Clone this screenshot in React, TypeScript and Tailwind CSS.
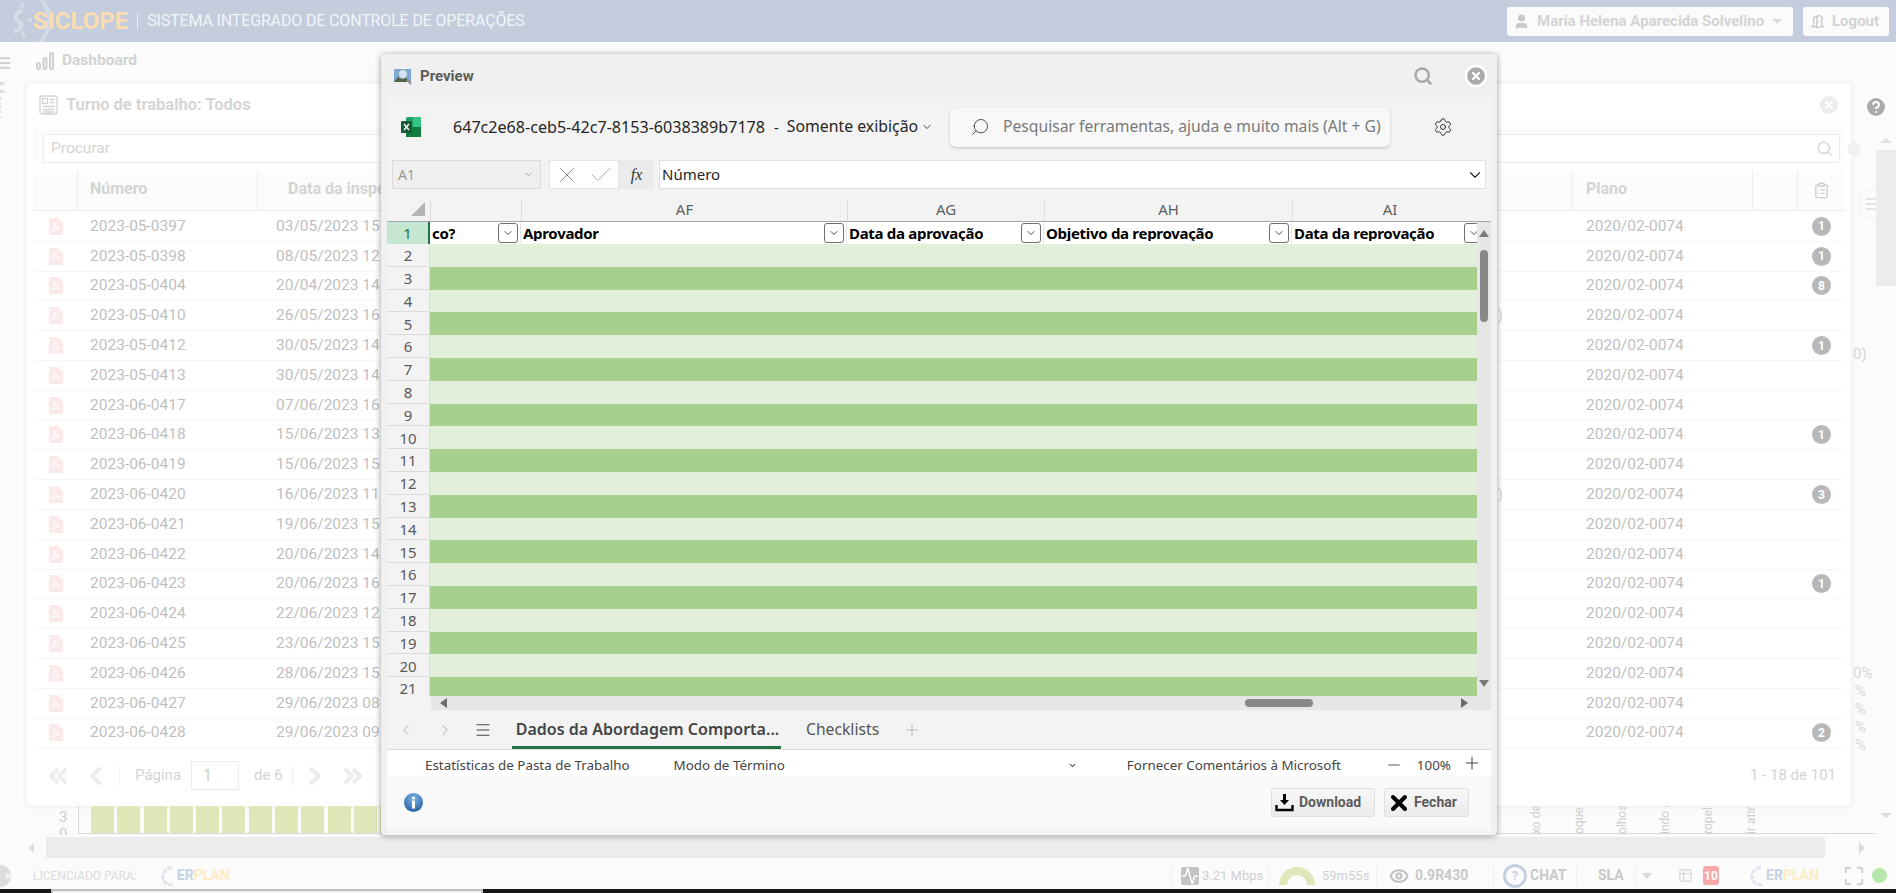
import React from 'react';
import {
  ChevronDown, ChevronLeft, ChevronRight, ChevronsLeft, ChevronsRight, Check, X, Search,
  Settings, Menu, Plus, Minus, Eye, Maximize, HelpCircle, ClipboardList, User, DoorOpen,
  Activity, CircleX, Table2,
} from 'lucide-react';

const rows = [
  ['2023-05-0397', '03/05/2023 15', '1', ''],
  ['2023-05-0398', '08/05/2023 12', '1', ''],
  ['2023-05-0404', '20/04/2023 14', '8', ''],
  ['2023-05-0410', '26/05/2023 16', '', ')'],
  ['2023-05-0412', '30/05/2023 14', '1', ''],
  ['2023-05-0413', '30/05/2023 14', '', ''],
  ['2023-06-0417', '07/06/2023 16', '', ''],
  ['2023-06-0418', '15/06/2023 13', '1', ''],
  ['2023-06-0419', '15/06/2023 15', '', ''],
  ['2023-06-0420', '16/06/2023 11', '3', ')'],
  ['2023-06-0421', '19/06/2023 15', '', ''],
  ['2023-06-0422', '20/06/2023 14', '', ''],
  ['2023-06-0423', '20/06/2023 16', '1', ''],
  ['2023-06-0424', '22/06/2023 12', '', ''],
  ['2023-06-0425', '23/06/2023 15', '', ''],
  ['2023-06-0426', '28/06/2023 15', '', ''],
  ['2023-06-0427', '29/06/2023 08', '', ''],
  ['2023-06-0428', '29/06/2023 09', '2', ''],
];

const sheetRows = Array.from({ length: 21 }, (_, i) => i + 1);
const bars = Array.from({ length: 12 }, (_, i) => i);
const rotated = ['xo de c', 'oque e', 'olhos e', 'indo a', 'ropela', 'ir ating'];
const percents = ['0%', '%', '%', '%', '%'];

const PdfIcon = () => (
  <svg width="14" height="17" viewBox="0 0 14 17" className="shrink-0">
    <path d="M0 0h9l5 5v12H0z" fill="#fceaea" />
    <path d="M3 13c2-2 3-5 3-8 1 3 2 5 5 6-3 0-5 0-8 2z" fill="none" stroke="#fff" strokeWidth="1" />
  </svg>
);

const ExcelIcon = () => (
  <svg width="20" height="20" viewBox="0 0 20 20">
    <rect x="5" y="0" width="15" height="20" rx="1.5" fill="#21a366" />
    <rect x="12" y="0" width="8" height="10" fill="#33c481" />
    <rect x="5" y="10" width="15" height="10" fill="#107c41" />
    <rect x="0" y="4" width="11" height="12" rx="1" fill="#185c37" />
    <path d="M3 7l5 6M8 7l-5 6" stroke="#fff" strokeWidth="1.4" />
  </svg>
);

const PreviewIcon = () => (
  <svg width="18" height="17" viewBox="0 0 18 17">
    <rect x="0" y="1" width="17" height="13" fill="#7fa8d8" />
    <path d="M0 14l4-5 3 2 4-2 6 5z" fill="#55633f" />
    <circle cx="9" cy="6" r="4.5" fill="#d5e4f5" stroke="#8aa" strokeWidth="1" />
    <path d="M13 12l4 4" stroke="#999" strokeWidth="2" />
  </svg>
);

const InfoIcon = () => (
  <svg width="19" height="19" viewBox="0 0 19 19">
    <defs>
      <radialGradient id="infoGrad" cx="0.5" cy="0.3" r="0.8">
        <stop offset="0" stopColor="#7fb0e4" />
        <stop offset="1" stopColor="#1c5a9e" />
      </radialGradient>
    </defs>
    <circle cx="9.5" cy="9.5" r="9.5" fill="url(#infoGrad)" />
    <circle cx="9.5" cy="5" r="1.6" fill="#fff" />
    <rect x="8" y="7.5" width="3" height="8" rx="0.5" fill="#fff" />
  </svg>
);

const BarsIcon = () => (
  <svg width="18" height="18" viewBox="0 0 18 18" fill="none" stroke="#cfcfcf" strokeWidth="2">
    <rect x="1" y="11" width="3" height="6" rx="1.5" />
    <rect x="7.5" y="6" width="3" height="11" rx="1.5" />
    <rect x="14" y="1" width="3" height="16" rx="1.5" />
  </svg>
);

const FormIcon = () => (
  <svg width="19" height="20" viewBox="0 0 19 20" fill="none" stroke="#d4d4d4" strokeWidth="1.3">
    <rect x="1" y="1" width="17" height="18" rx="2" />
    <rect x="3.5" y="3.5" width="5" height="5" />
    <path d="M10.5 4.5h5M10.5 7.5h5M3.5 11.5h12M3.5 14.5h12M3.5 17h12" />
  </svg>
);

const DownloadIcon = () => (
  <svg width="19" height="19" viewBox="0 0 19 19">
    <path d="M8 1h3v6h3l-4.5 5L5 7h3z" fill="#000" />
    <path d="M1.5 12v5h16v-5" fill="none" stroke="#000" strokeWidth="2.4" />
  </svg>
);

const FilterButton = () => (
  <span className="flex h-[20px] w-[20px] shrink-0 items-center justify-center rounded-[3px] border border-[#707070] bg-white">
    <ChevronDown size={12} strokeWidth={1.6} className="text-[#222]" />
  </span>
);

const HeaderCell = ({ width, label }: { width: string; label: string }) => (
  <div className={`${width} flex shrink-0 items-center justify-between border-r border-[#e4e4e4] pl-[2px] pr-[2px]`}>
    <span className="truncate text-[15px] font-bold leading-none tracking-[-0.3px] text-black [font-family:'Noto_Sans',sans-serif]">{label}</span>
    <FilterButton />
  </div>
);

const ErplanLogo = () => (
  <span className="flex items-center">
    <svg width="16" height="22" viewBox="0 0 16 22" className="mr-[1px]">
      <path d="M12 2C4 4 1 11 4 16c2 3 6 4 9 4" fill="none" stroke="#dfe4ec" strokeWidth="3" strokeDasharray="5 1" />
    </svg>
    <span className="text-[14px] font-bold text-[#c5d3e6]">ER</span>
    <span className="text-[14px] font-bold text-[#fcecc4]">PLAN</span>
  </span>
);

const Sep = ({ h = 'h-[20px]' }: { h?: string }) => <span className={`${h} block w-px bg-[#efefef]`} />;

export default function App() {
  return (
    <div className="relative flex h-[893px] w-[1896px] flex-col overflow-hidden bg-[#fbfbfb] [font-family:'Roboto',sans-serif]">
      {/* top bar */}
      <header className="relative flex h-[42px] shrink-0 items-center bg-[#c3cddd] pl-[33px] pr-[7px]">
        <svg width="54" height="42" viewBox="0 0 54 42" className="absolute left-0 top-0">
          <circle cx="17" cy="20" r="32" fill="none" stroke="#d3dbe6" strokeWidth="4" />
          <path d="M24 2l-3 6M32 20h-5M25 38l-3-6" stroke="#d3dbe6" strokeWidth="3" />
          <path d="M22 10c-8 4-8 10-2 12 4 2 0 8-6 10" fill="none" stroke="#d6dde8" strokeWidth="4" />
        </svg>
        <span className="relative text-[24px] font-bold leading-none text-[#fbdcb0]">SICLOPE</span>
        <span className="mx-[9px] h-[17px] w-px bg-[#e8edf3]" />
        <span className="text-[16px] tracking-[-0.15px] text-[#f2f4f8]">SISTEMA INTEGRADO DE CONTROLE DE OPERAÇÕES</span>
        <div className="ml-auto flex items-center gap-[10px]">
          <div className="flex h-[29px] w-[286px] items-center rounded-[3px] bg-[#fbfbfb] pl-[6px]">
            <User size={17} fill="#c9c9c9" className="text-[#c9c9c9]" />
            <span className="ml-[7px] text-[15px] font-bold text-[#d4d4d4]">Maria Helena Aparecida Solvelino</span>
            <span className="ml-auto mr-[11px] h-0 w-0 border-x-[5px] border-t-[5px] border-x-transparent border-t-[#dcdcdc]" />
          </div>
          <div className="flex h-[29px] w-[86px] items-center rounded-[3px] bg-[#fbfbfb] pl-[7px]">
            <DoorOpen size={15} className="text-[#c4c4c4]" />
            <span className="ml-[7px] text-[15px] font-bold text-[#d4d4d4]">Logout</span>
          </div>
        </div>
      </header>

      <div className="flex min-h-0 flex-1">
        {/* menu rail */}
        <aside className="flex w-[22px] shrink-0 flex-col overflow-hidden pt-[13px]">
          <Menu size={16} strokeWidth={3} className="-ml-[4px] text-[#cfcfcf]" />
          <span className="-ml-[14px] mt-[10px] self-start text-[15px] text-[#d8d8d8] [writing-mode:vertical-rl]">Menu</span>
        </aside>

        {/* page */}
        <main className="flex min-w-0 flex-1 flex-col">
          <div className="flex h-[37px] w-[130px] shrink-0 items-center bg-[#fcfcfc] pl-[14px]">
            <BarsIcon />
            <span className="ml-[8px] text-[15.5px] font-bold text-[#d2d2d2]">Dashboard</span>
          </div>

          <div className="mt-[5px] flex shrink-0">
            <section className="ml-[5px] flex h-[722px] w-[1824px] shrink-0 flex-col rounded-[4px] bg-white px-[6px] shadow-[0_0_6px_rgba(0,0,0,0.08)]">
              <div className="flex h-[42px] shrink-0 items-center pl-[6px] pr-[4px]">
                <FormIcon />
                <span className="ml-[8px] pt-[1px] text-[16.5px] font-bold text-[#d6d6d6]">Turno de trabalho: Todos</span>
                <CircleX size={24} fill="#ececec" className="ml-auto text-white" />
              </div>
              <div className="flex h-[37px] shrink-0 items-start bg-[#fcfcfc] pl-[10px] pr-[5px] pt-[8px]">
                <div className="flex h-[29px] flex-1 items-center justify-between border border-[#ececec] bg-white pl-[7px] pr-[6px]">
                  <span className="pt-[1px] text-[15.5px] text-[#d4d4d4]">Procurar</span>
                  <Search size={17} strokeWidth={2.5} className="text-[#dcdcdc]" />
                </div>
              </div>
              <div className="mt-[7px] flex h-[41px] shrink-0 items-center border-b border-[#eeeeee] bg-[#fcfcfc] text-[16px] font-bold text-[#d4d4d4]">
                <span className="h-full w-[45px] border-r border-[#eeeeee]" />
                <span className="flex h-full w-[180px] items-center border-r border-[#eeeeee] pb-[2px] pl-[12px]">Número</span>
                <span className="flex h-full w-[1315px] items-center border-r border-[#eeeeee] pb-[2px] pl-[30px]">Data da inspeção</span>
                <span className="flex h-full w-[180px] items-center border-r border-[#eeeeee] pb-[2px] pl-[13px]">Plano</span>
                <span className="h-full w-[45px] border-r border-[#eeeeee]" />
                <span className="flex flex-1 items-center justify-center"><ClipboardList size={17} className="text-[#cfcfcf]" /></span>
              </div>
              <div className="mt-[1px] shrink-0">
                {rows.map(([num, date, badge, tail]) => (
                  <div key={num} className="flex h-[29.8px] items-center border-b border-[#f7f7f7] text-[15.5px] text-[#bfbfbf]">
                    <span className="flex w-[45px] justify-center"><PdfIcon /></span>
                    <span className="w-[180px] pl-[12px]">{num}</span>
                    <span className="flex w-[1315px] justify-between pl-[18px] pr-[70px]">
                      <span>{date}</span>
                      <span className="text-[#d8d8d8]">{tail}</span>
                    </span>
                    <span className="w-[180px] pl-[13px]">2020/02-0074</span>
                    <span className="w-[45px]" />
                    <span className="flex flex-1 justify-center">
                      {badge && (
                        <span className="flex h-[19px] w-[19px] items-center justify-center rounded-full bg-[#b8b8b8] text-[12px] font-bold text-white">{badge}</span>
                      )}
                    </span>
                  </div>
                ))}
              </div>
              <div className="flex flex-1 items-center pb-[3px] pl-[11px] pr-[9px] text-[15px] text-[#d4d4d4]">
                <ChevronsLeft size={28} strokeWidth={3.5} className="text-[#ececec]" />
                <ChevronLeft size={28} strokeWidth={3.5} className="ml-[10px] text-[#ececec]" />
                <span className="ml-[9px] h-[18px] w-px bg-[#efefef]" />
                <span className="ml-[15px]">Página</span>
                <span className="ml-[10px] flex h-[29px] w-[48px] items-center border border-[#ececec] pl-[11px] text-[16px] text-[#cfcfcf]">1</span>
                <span className="ml-[15px]">de 6</span>
                <span className="ml-[9px] h-[18px] w-px bg-[#efefef]" />
                <ChevronRight size={28} strokeWidth={3.5} className="ml-[8px] text-[#ececec]" />
                <ChevronsRight size={28} strokeWidth={3.5} className="ml-[10px] text-[#ececec]" />
                <span className="ml-auto">1 - 18 de 101</span>
              </div>
            </section>
            <div className="flex flex-col pl-[13px] pt-[11px]">
              <HelpCircle size={24} fill="#ababab" className="text-white" />
              <Settings size={16} fill="#f0f0f0" className="-ml-[18px] mt-[22px] text-[#f0f0f0]" />
              <span className="-ml-[4px] mt-[34px] flex h-[26px] w-[20px] flex-col justify-center gap-[3px] rounded-l-[3px] border border-[#f4f4f4] pl-[5px]">
                <span className="h-[2px] w-[13px] bg-[#e4e4e4]" />
                <span className="h-[2px] w-[13px] bg-[#e4e4e4]" />
                <span className="h-[2px] w-[13px] bg-[#e4e4e4]" />
              </span>
              <span className="-ml-[11px] mt-[126px] text-[15px] text-[#d4d4d4]">0)</span>
              <span className="-ml-[11px] mt-[298px] flex flex-col text-[15px] leading-[18px] text-[#d8d8d8]">
                {percents.map((p, i) => (
                  <span key={i} className={i === 0 ? '' : 'pl-[2px]'}>{p}</span>
                ))}
              </span>
            </div>
          </div>

          {/* chart strip */}
          <div className="flex h-[29px] shrink-0 overflow-hidden">
            <div className="ml-[37px] flex w-[19px] flex-col items-start pt-[3px] text-[15px] leading-[17px] text-[#cdcdcd]">
              <span>3</span>
              <span>0</span>
            </div>
            <div className="flex h-[28px] w-[1800px] items-stretch gap-[3.3px] border-b border-l border-[#d8d8d8] pl-[12px]">
              {bars.map((b) => (
                <span key={b} className="w-[23px] bg-[#dfe6b8]" />
              ))}
              <span className="ml-[1117px] flex gap-[20px] text-[12px] text-[#cfcfcf]">
                {rotated.map((t) => (
                  <span key={t} className="flex h-[28px] w-[23px] rotate-180 items-center whitespace-nowrap [writing-mode:vertical-rl]">{t}</span>
                ))}
              </span>
            </div>
          </div>

          {/* horizontal scroll */}
          <div className="mt-[2px] flex h-[21px] shrink-0 items-center">
            <span className="ml-[6px] h-0 w-0 border-y-[5px] border-r-[6px] border-y-transparent border-r-[#dcdcdc]" />
            <span className="ml-[12px] h-full w-[1779px] bg-[#ececec]" />
            <span className="ml-[34px] h-0 w-0 border-y-[6px] border-l-[6px] border-y-transparent border-l-[#dcdcdc]" />
          </div>
        </main>

        {/* right scroll */}
        <aside className="flex w-[20px] shrink-0 flex-col items-center pt-[96px]">
          <span className="h-0 w-0 border-x-[6px] border-b-[5px] border-x-transparent border-b-[#e0e0e0]" />
          <span className="mt-[7px] h-[136px] w-full bg-[#ececec]" />
          <span className="mt-[527px] h-0 w-0 border-x-[6px] border-t-[5px] border-x-transparent border-t-[#dcdcdc]" />
        </aside>
      </div>

      {/* status bar */}
      <footer className="flex h-[31px] shrink-0 items-center whitespace-nowrap pt-[4px] text-[#d4d4d4]">
        <div className="flex w-[1171px] shrink-0 items-center">
          <span className="-ml-[11px] flex h-[22px] w-[22px] items-center justify-end rounded-full bg-[#dcdcdc] text-[12px] font-bold text-white">»</span>
          <span className="ml-[22px] text-[12px] text-[#dcdcdc]">LICENCIADO PARA:</span>
          <span className="ml-[23px]"><ErplanLogo /></span>
        </div>
        <Sep />
        <Activity size={18} className="ml-[9px] rounded-[2px] bg-[#c4c4c4] text-white" />
        <span className="ml-[3px] w-[56px] text-[13px] text-[#d0d0d0]">3.21 Mbps</span>
        <span className="ml-[10px]"><Sep /></span>
        <svg width="36" height="18" viewBox="0 0 36 18" className="ml-[10px]">
          <path d="M4 18a14 14 0 0 1 28 0" fill="none" stroke="#dfe6b8" strokeWidth="8" />
        </svg>
        <span className="ml-[7px] w-[43px] text-[13px] text-[#d0d0d0]">59m55s</span>
        <span className="ml-[11px]"><Sep /></span>
        <Eye size={20} strokeWidth={2.5} className="ml-[12px] text-[#c0c0c0]" />
        <span className="ml-[6px] w-[53px] text-[14px] font-bold text-[#c8c8c8]">0.9R430</span>
        <span className="ml-[25px]"><Sep /></span>
        <span className="ml-[9px] flex h-[24px] w-[24px] items-center justify-center rounded-full border-[3px] border-[#c5d1e2] text-[12px] font-bold text-[#c5d1e2]">?</span>
        <span className="ml-[3px] w-[35px] text-[14px] font-bold text-[#c8c8c8]">CHAT</span>
        <span className="ml-[11px]"><Sep /></span>
        <span className="ml-[21px] w-[26px] text-[14px] font-bold text-[#c8c8c8]">SLA</span>
        <span className="ml-[11px]"><Sep /></span>
        <span className="ml-[6px] h-0 w-0 border-x-[5px] border-t-[6px] border-x-transparent border-t-[#d8d8d8]" />
        <Table2 size={15} className="ml-[26px] text-[#d8d8d8]" />
        <span className="ml-[10px] flex h-[19px] w-[16px] items-center justify-center rounded-[3px] bg-[#f7a8a8] text-[12px] font-bold text-white">10</span>
        <span className="ml-[30px]"><ErplanLogo /></span>
        <Maximize size={22} className="ml-[24px] text-[#cfcfcf]" />
        <span className="ml-[7px] h-[15px] w-[15px] rounded-full bg-[#b5e8a9]" />
      </footer>

      {/* desktop strip at the bottom edge */}
      <div className="flex h-[4px] shrink-0 bg-[#171717] pl-[51px]">
        <span className="h-full w-[432px] border-x-[2px] border-t-[2px] border-[#c0c0c0] bg-[#f0f0f0]" />
      </div>

      {/* preview modal */}
      <div className="absolute left-[381px] top-[54px] flex h-[781px] w-[1116px] flex-col rounded-[4px] bg-[#f0f0f0] shadow-[0_1px_6px_rgba(0,0,0,0.4)]">
        <div className="flex h-[44px] shrink-0 items-center pl-[13px] pr-[9px]">
          <PreviewIcon />
          <span className="ml-[8px] text-[15px] font-bold text-[#5c5c5c]">Preview</span>
          <Search size={20} strokeWidth={3} className="ml-auto text-[#a8a8a8]" />
          <CircleX size={24} fill="#aaaaaa" strokeWidth={2.4} className="ml-[31px] text-white" />
        </div>

        <div className="mx-[6px] flex min-h-0 flex-1 flex-col bg-[#f3f3f3] [font-family:'Noto_Sans',sans-serif]">
          {/* office toolbar */}
          <div className="flex h-[62px] shrink-0 items-center pb-[4px] pl-[14px] pr-[38px]">
            <ExcelIcon />
            <span className="ml-[32px] text-[16.1px] text-[#262626]">647c2e68-ceb5-42c7-8153-6038389b7178</span>
            <span className="ml-[9px] text-[15px] text-[#262626]">-</span>
            <span className="ml-[8px] text-[15.8px] text-[#262626]">Somente exibição</span>
            <ChevronDown size={12} className="ml-[3px] text-[#444]" />
            <div className="ml-auto flex h-[39px] w-[440px] shrink-0 items-center rounded-[6px] bg-[#f8f8f8] pl-[20px] shadow-[0_1px_3px_rgba(0,0,0,0.2)]">
              <Search size={20} strokeWidth={1} className="-scale-x-100 text-[#333]" />
              <span className="ml-[13px] whitespace-nowrap text-[15.7px] text-[#7a7a7a]">Pesquisar ferramentas, ajuda e muito mais (Alt + G)</span>
            </div>
            <Settings size={20} strokeWidth={1.2} className="ml-[43px] shrink-0 text-[#333]" />
          </div>

          {/* formula bar */}
          <div className="flex h-[29px] shrink-0 items-stretch px-[5px]">
            <div className="flex w-[149px] items-center justify-between border border-[#dcdcdc] bg-[#efefef] pl-[5px] pr-[6px]">
              <span className="text-[14px] text-[#9a9a9a]">A1</span>
              <ChevronDown size={11} className="text-[#9a9a9a]" />
            </div>
            <div className="ml-[8px] flex w-[70px] items-center justify-around border border-[#e4e4e4] bg-white">
              <X size={26} strokeWidth={0.9} className="text-[#8c8c8c]" />
              <Check size={26} strokeWidth={0.9} className="text-[#a8a8a8]" />
            </div>
            <span className="flex w-[35px] items-center justify-center bg-[#ebebeb] text-[16px] italic text-[#333] [font-family:'Liberation_Serif',serif]">fx</span>
            <div className="ml-[5px] flex flex-1 items-center justify-between border border-[#e0e0e0] bg-white pl-[2px] pr-[1px]">
              <span className="pb-[1px] text-[15px] leading-none text-[#262626]">Número</span>
              <ChevronDown size={18} strokeWidth={1.5} className="text-[#222]" />
            </div>
          </div>

          {/* column letters */}
          <div className="mt-[10px] flex h-[23px] shrink-0 border-b border-[#a6a6a6] text-[15px] leading-[21px] text-[#5f5f5f]">
            <div className="flex w-[43px] items-start justify-end pr-[5px] pt-[3px]">
              <span className="h-0 w-0 border-b-[14px] border-l-[14px] border-b-[#b5b5b5] border-l-transparent" />
            </div>
            <span className="w-[91px] border-l border-[#dcdcdc]" />
            <span className="w-[326px] border-l border-[#dcdcdc] text-center">AF</span>
            <span className="w-[197px] border-l border-[#dcdcdc] text-center">AG</span>
            <span className="w-[248px] border-l border-[#dcdcdc] text-center">AH</span>
            <span className="w-[195px] border-l border-[#dcdcdc] text-center">AI</span>
          </div>

          {/* sheet */}
          <div className="flex h-[474px] shrink-0 overflow-hidden">
            <div className="w-[43px] shrink-0">
              {sheetRows.map((n) => (
                <div
                  key={n}
                  className={
                    n === 1
                      ? 'flex h-[22px] items-center justify-center border-r-2 border-[#217346] bg-[#c5e6d0] pt-[1px] text-[15px] text-[#217346]'
                      : 'flex h-[22.8px] items-center justify-center border-b border-r border-[#dcdcdc] pt-[1px] text-[15px] text-[#5a5a5a]'
                  }
                >
                  {n}
                </div>
              ))}
            </div>
            <div className="w-[1047px] shrink-0 overflow-hidden">
              <div className="flex h-[22px] w-[1057px] overflow-hidden bg-white py-[1px]">
                <HeaderCell width="w-[91px]" label="co?" />
                <HeaderCell width="w-[326px]" label="Aprovador" />
                <HeaderCell width="w-[197px]" label="Data da aprovação" />
                <HeaderCell width="w-[248px]" label="Objetivo da reprovação" />
                <HeaderCell width="w-[195px]" label="Data da reprovação" />
              </div>
              {sheetRows.slice(1).map((n) => (
                <div key={n} className={n % 2 === 0 ? 'h-[22.8px] bg-[#e2efda]' : 'h-[22.8px] bg-[#a7cf8e]'} />
              ))}
            </div>
            <div className="flex flex-1 flex-col items-center bg-[#e6e6e6] pt-[8px]">
              <span className="h-0 w-0 border-x-[5px] border-b-[7px] border-x-transparent border-b-[#7a7a7a]" />
              <span className="mt-[13px] h-[72px] w-[8px] rounded-full bg-[#888888]" />
              <span className="mb-[9px] mt-auto h-0 w-0 border-x-[5px] border-t-[7px] border-x-transparent border-t-[#7a7a7a]" />
            </div>
          </div>

          {/* horizontal sheet scroll */}
          <div className="ml-[44px] flex h-[14px] shrink-0 items-center bg-[#e6e6e6]">
            <span className="ml-[9px] h-0 w-0 border-y-[5px] border-r-[7px] border-y-transparent border-r-[#6a6a6a]" />
            <span className="ml-[798px] h-[8px] w-[68px] rounded-full bg-[#888888]" />
            <span className="ml-[148px] h-0 w-0 border-y-[5px] border-l-[7px] border-y-transparent border-l-[#6a6a6a]" />
          </div>

          {/* sheet tabs */}
          <div className="flex h-[39px] shrink-0 items-stretch pl-[10px] text-[#555]">
            <ChevronLeft size={18} strokeWidth={1} className="mt-[11px] text-[#999]" />
            <ChevronRight size={18} strokeWidth={1} className="ml-[21px] mt-[11px] text-[#999]" />
            <Menu size={18} strokeWidth={1.2} className="ml-[20px] mt-[11px] text-[#333]" />
            <div className="ml-[20px] flex w-[269px] items-center justify-center whitespace-nowrap border-b-[3px] border-[#217346] pl-[2px] pt-[1px] text-[16px] font-semibold text-[#444]">
              Dados da Abordagem Comporta...
            </div>
            <span className="ml-[25px] flex items-center text-[15.7px] text-[#555]">Checklists</span>
            <Plus size={18} strokeWidth={1} className="ml-[24px] mt-[11px] text-[#aaa]" />
          </div>

          {/* status row */}
          <div className="flex h-[27px] shrink-0 items-center border-t border-[#dedede] bg-white pl-[38px] pt-[4px] text-[13.4px] text-[#444]">
            <span>Estatísticas de Pasta de Trabalho</span>
            <span className="ml-[44px]">Modo de Término</span>
            <ChevronDown size={9} strokeWidth={3} className="ml-[283px] text-[#555]" />
            <span className="ml-[50px]">Fornecer Comentários à Microsoft</span>
            <Minus size={18} strokeWidth={1.1} className="ml-[44px] text-[#333]" />
            <span className="ml-[14px]">100%</span>
            <Plus size={20} strokeWidth={1.1} className="-mt-[4px] ml-[11px] text-[#333]" />
          </div>

          {/* dialog footer */}
          <div className="flex h-[53px] shrink-0 items-center bg-[#f9f9f9] pl-[17px] pr-[22px] [font-family:'Roboto',sans-serif]">
            <InfoIcon />
            <button className="ml-auto flex h-[29px] w-[104px] items-center gap-[5px] rounded-[3px] border border-[#e0e0e0] bg-gradient-to-b from-[#f7f7f7] to-[#ececec] pl-[3px] text-[14px] font-bold text-[#5c5c5c]">
              <DownloadIcon />
              Download
            </button>
            <button className="ml-[9px] flex h-[29px] w-[85px] items-center gap-[3px] rounded-[3px] border border-[#e0e0e0] bg-gradient-to-b from-[#f7f7f7] to-[#ececec] pl-[2px] text-[14px] font-bold text-[#5c5c5c]">
              <X size={24} strokeWidth={4} className="text-black" />
              Fechar
            </button>
          </div>
        </div>
      </div>
    </div>
  );
}
